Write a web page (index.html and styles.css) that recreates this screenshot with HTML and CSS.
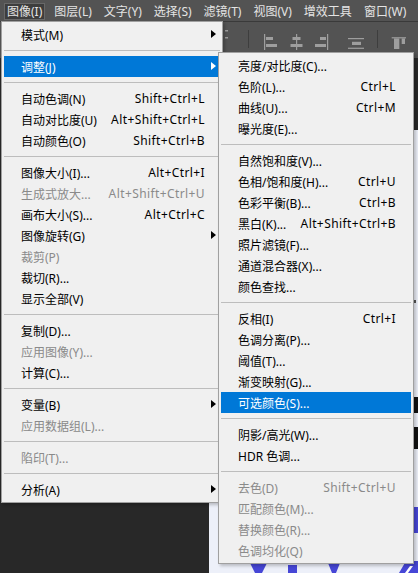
FILE: index.html
```html
<!DOCTYPE html>
<html lang="zh-CN">
<head>
<meta charset="utf-8">
<title>图像菜单</title>
<link rel="stylesheet" href="styles.css">
</head>
<body>
<div class="app">
  <nav class="menubar">
    <span class="mb-item active">图像(I)</span>
    <span class="mb-item">图层(L)</span>
    <span class="mb-item">文字(Y)</span>
    <span class="mb-item">选择(S)</span>
    <span class="mb-item">滤镜(T)</span>
    <span class="mb-item">视图(V)</span>
    <span class="mb-item">增效工具</span>
    <span class="mb-item">窗口(W)</span>
    <span class="mb-item">帮助(H)</span>
  </nav>

  <div class="optionsbar">
    <svg class="tool-icon partial" width="14" height="12" viewBox="0 0 14 12"><rect x="11" y="1" width="3" height="1.5"/><rect x="11" y="8" width="3" height="1.5"/></svg>
    <span class="ob-sep first"></span>
    <svg class="tool-icon i1" width="16" height="16" viewBox="0 0 16 16"><rect x="1" y="0" width="1.2" height="16"/><rect x="3" y="3" width="7" height="3"/><rect x="3" y="10" width="11" height="3"/></svg>
    <svg class="tool-icon i2" width="16" height="16" viewBox="0 0 16 16"><rect x="8" y="0" width="1.2" height="16"/><rect x="4.5" y="3" width="8" height="3"/><rect x="2.5" y="10" width="12" height="3"/></svg>
    <svg class="tool-icon i3" width="16" height="16" viewBox="0 0 16 16"><rect x="14" y="0" width="1.2" height="16"/><rect x="7" y="3" width="6" height="3"/><rect x="2" y="10" width="11" height="3"/></svg>
    <svg class="tool-icon i4" width="16" height="16" viewBox="0 0 16 16"><rect x="0" y="4" width="16" height="1.2"/><rect x="4" y="7.8" width="9" height="3.2"/><rect x="0" y="13.7" width="16" height="1.2"/></svg>
    <span class="ob-sep second"></span>
    <svg class="tool-icon i5" width="16" height="16" viewBox="0 0 16 16"><rect x="0.7" y="3.2" width="14.3" height="1.2"/><rect x="3" y="4.4" width="5.3" height="10.6"/><rect x="10.7" y="4.4" width="3.3" height="5.6"/></svg>
  </div>

  <div class="workspace">
    <div class="canvas">
      <svg width="209" height="443" viewBox="0 0 209 443">
        <rect x="205" y="170" width="2" height="3" fill="#555"/>
        <rect x="205" y="267" width="4" height="16" fill="#111"/>
        <rect x="205" y="297" width="4" height="22" fill="#111"/>
        <rect x="205" y="377" width="4" height="26" fill="#4646d6"/>
        <polygon points="41,433 58,433 53,443 46,443" fill="#4646d6"/>
        <polygon points="79,435 88,435 88,443 79,443" fill="#4646d6"/>
        <polygon points="119,433 131,433 127,443 123,443" fill="#4646d6"/>
        <polygon points="190,443 197,431 209,431 209,443" fill="#4646d6"/>
        <polygon points="196,443 201,436 204,436 199,443" fill="#ffffff"/>
      </svg>
    </div>
  </div>

  <div class="menu main-menu">
    <div class="mi"><span class="lbl">模式(M)</span><span class="arrow"></span></div>
    <div class="sep"></div>
    <div class="mi hl"><span class="lbl">调整(J)</span><span class="arrow"></span></div>
    <div class="sep"></div>
    <div class="mi"><span class="lbl">自动色调(N)</span><span class="key">Shift+Ctrl+L</span></div>
    <div class="mi"><span class="lbl">自动对比度(U)</span><span class="key">Alt+Shift+Ctrl+L</span></div>
    <div class="mi"><span class="lbl">自动颜色(O)</span><span class="key">Shift+Ctrl+B</span></div>
    <div class="sep"></div>
    <div class="mi"><span class="lbl">图像大小(I)...</span><span class="key">Alt+Ctrl+I</span></div>
    <div class="mi off"><span class="lbl">生成式放大...</span><span class="key">Alt+Shift+Ctrl+U</span></div>
    <div class="mi"><span class="lbl">画布大小(S)...</span><span class="key">Alt+Ctrl+C</span></div>
    <div class="mi"><span class="lbl">图像旋转(G)</span><span class="arrow"></span></div>
    <div class="mi off"><span class="lbl">裁剪(P)</span></div>
    <div class="mi"><span class="lbl">裁切(R)...</span></div>
    <div class="mi"><span class="lbl">显示全部(V)</span></div>
    <div class="sep"></div>
    <div class="mi"><span class="lbl">复制(D)...</span></div>
    <div class="mi off"><span class="lbl">应用图像(Y)...</span></div>
    <div class="mi"><span class="lbl">计算(C)...</span></div>
    <div class="sep"></div>
    <div class="mi"><span class="lbl">变量(B)</span><span class="arrow"></span></div>
    <div class="mi off"><span class="lbl">应用数据组(L)...</span></div>
    <div class="sep"></div>
    <div class="mi off"><span class="lbl">陷印(T)...</span></div>
    <div class="sep"></div>
    <div class="mi"><span class="lbl">分析(A)</span><span class="arrow"></span></div>
  </div>

  <div class="menu sub-menu">
    <div class="mi"><span class="lbl">亮度/对比度(C)...</span></div>
    <div class="mi"><span class="lbl">色阶(L)...</span><span class="key">Ctrl+L</span></div>
    <div class="mi"><span class="lbl">曲线(U)...</span><span class="key">Ctrl+M</span></div>
    <div class="mi"><span class="lbl">曝光度(E)...</span></div>
    <div class="sep"></div>
    <div class="mi"><span class="lbl">自然饱和度(V)...</span></div>
    <div class="mi"><span class="lbl">色相/饱和度(H)...</span><span class="key">Ctrl+U</span></div>
    <div class="mi"><span class="lbl">色彩平衡(B)...</span><span class="key">Ctrl+B</span></div>
    <div class="mi"><span class="lbl">黑白(K)...</span><span class="key">Alt+Shift+Ctrl+B</span></div>
    <div class="mi"><span class="lbl">照片滤镜(F)...</span></div>
    <div class="mi"><span class="lbl">通道混合器(X)...</span></div>
    <div class="mi"><span class="lbl">颜色查找...</span></div>
    <div class="sep"></div>
    <div class="mi"><span class="lbl">反相(I)</span><span class="key">Ctrl+I</span></div>
    <div class="mi"><span class="lbl">色调分离(P)...</span></div>
    <div class="mi"><span class="lbl">阈值(T)...</span></div>
    <div class="mi"><span class="lbl">渐变映射(G)...</span></div>
    <div class="mi hl"><span class="lbl">可选颜色(S)...</span></div>
    <div class="sep"></div>
    <div class="mi"><span class="lbl">阴影/高光(W)...</span></div>
    <div class="mi"><span class="lbl">HDR 色调...</span></div>
    <div class="sep"></div>
    <div class="mi off"><span class="lbl">去色(D)</span><span class="key">Shift+Ctrl+U</span></div>
    <div class="mi off"><span class="lbl">匹配颜色(M)...</span></div>
    <div class="mi off"><span class="lbl">替换颜色(R)...</span></div>
    <div class="mi off"><span class="lbl">色调均化(Q)</span></div>
  </div>
</div>
</body>
</html>
```

FILE: styles.css
```css
* { box-sizing: border-box; }

html, body {
  margin: 0;
  padding: 0;
}

body {
  width: 418px;
  height: 573px;
  overflow: hidden;
  background: #282828;
  font-family: "Noto Sans", "Noto Sans CJK SC", sans-serif;
  font-size: 12px;
}

.app {
  position: relative;
  width: 418px;
  height: 573px;
  display: flex;
  flex-direction: column;
}

/* ---------- menu bar ---------- */
.menubar {
  flex: none;
  height: 22px;
  display: flex;
  align-items: flex-start;
  gap: 6px;
  padding: 3px 0 0 4px;
  background: #535353;
  border-bottom: 1px solid #3a3a3a;
  color: #e4e4e4;
  white-space: nowrap;
  overflow: hidden;
}

.mb-item {
  flex: none;
  line-height: 15px;
  padding: 0 2px;
  border: 1px solid transparent;
}

.mb-item.active {
  background: #3d3d3d;
  border-color: #686868;
}

/* ---------- options bar ---------- */
.optionsbar {
  flex: none;
  height: 36px;
  display: flex;
  align-items: flex-start;
  padding-left: 214px;
  background: #535353;
  overflow: hidden;
}

.tool-icon {
  display: block;
  flex: none;
  margin-top: 12px;
  fill: #9e9e9e;
}

.tool-icon.partial { margin-top: 7px; }
.tool-icon.i1 { margin-left: 14px; }
.tool-icon.i2 { margin-left: 9px; }
.tool-icon.i3 { margin-left: 9px; }
.tool-icon.i4 { margin-left: 19px; }
.tool-icon.i5 { margin-left: 13px; }

.ob-sep {
  flex: none;
  width: 1px;
  height: 18px;
  margin-top: 8px;
  background: #3e3e3e;
}

.ob-sep.first { margin-left: 20px; }
.ob-sep.second { margin-left: 13px; }

/* ---------- workspace ---------- */
.workspace {
  flex: 1;
  display: grid;
  grid-template-columns: 209px 1fr;
  background: #282828;
  min-height: 0;
}

.canvas {
  grid-column: 2;
  margin-top: 72px;
  background: #edf0f9;
  overflow: hidden;
}

.canvas svg { display: block; }

/* ---------- dropdown menus ---------- */
.menu {
  position: absolute;
  background: #f0f0f0;
  border: 1px solid #a0a0a0;
  padding: 2px;
  color: #000;
  box-shadow: 2px 2px 3px rgba(0, 0, 0, 0.22);
}

.main-menu {
  left: 1px;
  top: 21px;
  width: 222px;
}

.sub-menu {
  left: 218px;
  top: 52px;
  width: 196px;
}

.mi {
  display: grid;
  grid-template-columns: 1fr auto 5px;
  column-gap: 6px;
  align-items: center;
  height: 21px;
  padding: 0 4px 0 17px;
  white-space: nowrap;
}

.mi .lbl { grid-column: 1; }

.mi .key {
  grid-column: 2;
  letter-spacing: 0.4px;
}

.mi .arrow {
  grid-column: 3;
  width: 0;
  height: 0;
  margin-top: -2px;
  border-left: 5px solid #000;
  border-top: 4.5px solid transparent;
  border-bottom: 4.5px solid transparent;
}

.mi.hl {
  background: #0078d7;
  color: #fff;
}

.mi.hl .arrow { border-left-color: #fff; }

.mi.off { color: #8a8a8a; }

.sep {
  height: 1px;
  margin: 5px 0;
  background: #bdbdbd;
}
```
